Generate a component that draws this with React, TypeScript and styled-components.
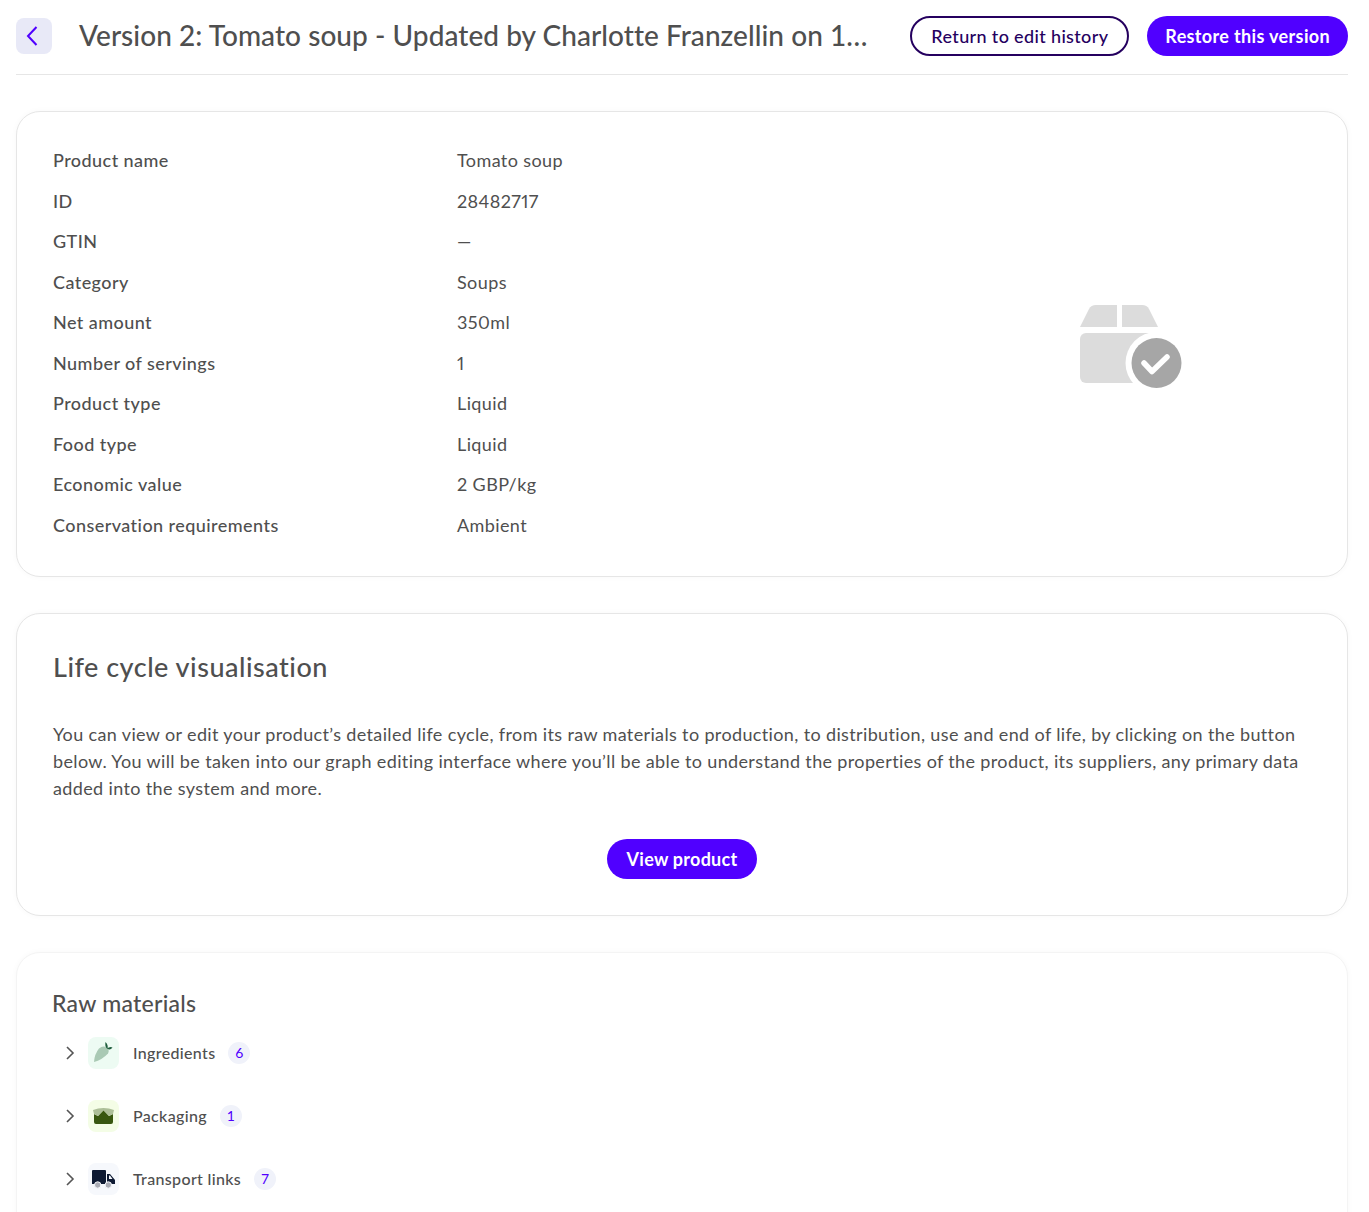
import React from 'react'
import styled, { createGlobalStyle } from 'styled-components'

const GlobalStyle = createGlobalStyle`
  html, body {
    margin: 0;
    height: 100%;
    overflow: hidden;
    background: #fff;
  }
  * {
    box-sizing: border-box;
  }
  body {
    font-family: 'Lato', 'Noto Sans', sans-serif;
    color: #4f4f4f;
  }
`

const Page = styled.div`
  height: 1212px;
  overflow: hidden;
  padding: 16px 21px 0 16px;
`

const Header = styled.header`
  display: flex;
  align-items: center;
  height: 59px;
  padding-bottom: 18px;
  border-bottom: 1px solid #e6e6e6;
`

const BackButton = styled.button`
  display: flex;
  align-items: center;
  justify-content: center;
  flex: none;
  width: 36px;
  height: 36px;
  margin-right: 27px;
  padding: 0 4px 0 0;
  border: 0;
  border-radius: 8px;
  background: #e8e9f7;
  color: #5000ff;
`

const Title = styled.h1`
  flex: 1;
  min-width: 0;
  margin: 0 0 2px;
  font-size: 28px;
  font-weight: 500;
  line-height: 40px;
  letter-spacing: 0.05px;
  color: #4f4f4f;
  white-space: nowrap;
`

const PillButton = styled.button<{ $outline?: boolean }>`
  flex: none;
  height: 40px;
  padding: 0 ${(p) => (p.$outline ? '19px' : '18px')};
  margin-left: ${(p) => (p.$outline ? '0' : '18px')};
  border-radius: 20px;
  border: ${(p) => (p.$outline ? '2px solid #25005f' : '0')};
  background: ${(p) => (p.$outline ? '#fff' : '#5000ff')};
  color: ${(p) => (p.$outline ? '#25005f' : '#fff')};
  font-family: inherit;
  font-size: 18px;
  font-weight: ${(p) => (p.$outline ? 500 : 700)};
  letter-spacing: 0.35px;
  line-height: 36px;
`

const ViewButton = styled(PillButton)`
  margin-left: 0;
  padding: 0 20px;
  letter-spacing: 0.25px;
`

const Card = styled.section`
  margin-top: 36px;
  padding: 36px;
  background: #fff;
  border: 1px solid #e6e6e6;
  border-radius: 24px;
  box-shadow: 0 0 6px rgba(0, 0, 0, 0.03);
`

const DetailsCard = styled(Card)`
  display: flex;
  height: 466px;
  padding-top: 28px;
`

const Details = styled.dl`
  flex: 1;
  display: grid;
  grid-template-columns: 404px 1fr;
  grid-auto-rows: 40.5px;
  align-items: center;
  margin: 0;
  font-size: 18px;
`

const Label = styled.dt`
  font-weight: 500;
  letter-spacing: 0.44px;
`

const Value = styled.dd`
  margin: 0;
  letter-spacing: 0.4px;
  font-variant-numeric: proportional-nums;
`

const PictureSlot = styled.div`
  flex: none;
  display: flex;
  align-items: center;
  justify-content: center;
  width: 340px;
  margin: 14px 10px 0 0;
`

const LifeCycleCard = styled(Card)`
  height: 303px;
  padding-top: 35px;
`

const SectionTitle = styled.h2`
  margin: 0;
  font-size: 27px;
  font-weight: 500;
  line-height: 36px;
  letter-spacing: 0.5px;
`

const Paragraph = styled.p`
  margin: 36px 0 0;
  font-size: 18px;
  line-height: 27px;
  letter-spacing: 0.36px;
`

const Centered = styled.div`
  display: flex;
  justify-content: center;
  margin-top: 37px;
`

const MaterialsCard = styled(Card)`
  height: 400px;
  padding: 33px 35px;
  border-color: #f4f4f4;
`

const MaterialsTitle = styled.h2`
  margin: 0;
  font-size: 23px;
  font-weight: 500;
  line-height: 34px;
  letter-spacing: 0.25px;
`

const MaterialsList = styled.ul`
  margin: 1px 0 0;
  padding: 0;
  list-style: none;
`

const MaterialRow = styled.li`
  display: flex;
  align-items: center;
  height: 63px;
  padding-left: 13px;
  font-size: 16px;
  font-weight: 500;
  letter-spacing: 0.34px;
`

const Chevron = styled.span`
  display: flex;
  width: 23px;
  color: #555;
`

const IconTile = styled.span<{ $bg: string }>`
  display: flex;
  align-items: center;
  justify-content: center;
  width: 31px;
  height: 32px;
  margin-right: 14px;
  border-radius: 8px;
  background: ${(p) => p.$bg};
`

const Count = styled.span`
  display: flex;
  align-items: center;
  justify-content: center;
  width: 22px;
  height: 22px;
  margin-left: 13px;
  border-radius: 50%;
  background: #f0f2fa;
  color: #5000ff;
  font-size: 14px;
  font-weight: 400;
`

const details = [
  ['Product name', 'Tomato soup'],
  ['ID', '28482717'],
  ['GTIN', '—'],
  ['Category', 'Soups'],
  ['Net amount', '350ml'],
  ['Number of servings', '1'],
  ['Product type', 'Liquid'],
  ['Food type', 'Liquid'],
  ['Economic value', '2 GBP/kg'],
  ['Conservation requirements', 'Ambient'],
]

function BoxCheckIcon() {
  return (
    <svg width="102" height="85" viewBox="0 0 102 85">
      <path d="M0 22 L9 4 Q11 0 16 0 H37 V22 Z" fill="#dcdcdc" />
      <path d="M42 0 H62 Q67 0 69 4 L78 22 H42 Z" fill="#dcdcdc" />
      <rect x="0" y="28" width="78" height="50" rx="6" fill="#dcdcdc" />
      <circle cx="76.5" cy="58" r="31" fill="#fff" />
      <circle cx="76.5" cy="58" r="25" fill="#a6a6a6" />
      <path
        d="M64 58 L72 66.5 L87 52"
        fill="none"
        stroke="#fff"
        strokeWidth="5.5"
        strokeLinecap="round"
        strokeLinejoin="round"
      />
    </svg>
  )
}

function CarrotIcon() {
  return (
    <svg width="31" height="32" viewBox="0 0 31 32">
      <path d="M6 25 Q6.5 17 11 11.5 Q15 8 18.5 10.5 Q22 13 20 16.5 Q14 23 6 25 Z" fill="#a9c9b4" />
      <path d="M17.5 5 Q20.5 8 19.5 12 Q16.5 10 17.5 5 Z" fill="#1d5c3c" />
      <path d="M19 11.5 Q22 9 24.5 10.5 Q22 14 19 11.5 Z" fill="#1d5c3c" />
    </svg>
  )
}

function PackageIcon() {
  return (
    <svg width="31" height="32" viewBox="0 0 31 32">
      <path d="M6 14 L10 16 L15.5 10 L21 16 L25 14 V22 Q25 24 23 24 H8 Q6 24 6 22 Z" fill="#38570f" />
      <path d="M5 10 Q10 8 15.5 8 Q21 8 26 10 L25 14 L21 16 L15.5 10.5 L10 16 L6 14 Z" fill="#adbf98" />
    </svg>
  )
}

function TruckIcon() {
  return (
    <svg width="31" height="32" viewBox="0 0 31 32">
      <path d="M4 8 Q4 7 5 7 H17 Q18 7 18 8 V21 H4 Z" fill="#0e1a33" />
      <path d="M19 11 H22 L27 17 V21 H19 Z M21 12.5 V16 H24.5 L22 12.5 Z" fill="#0e1a33" fillRule="evenodd" />
      <circle cx="9.7" cy="22" r="3.2" fill="#aaacb5" stroke="#f6f8fc" />
      <circle cx="20.3" cy="22" r="3.2" fill="#aaacb5" stroke="#f6f8fc" />
    </svg>
  )
}

const RightChevron = () => (
  <svg width="10" height="14" viewBox="0 0 10 14" fill="none" stroke="currentColor" strokeWidth="1.6">
    <path d="M2 1 L8 7 L2 13" />
  </svg>
)

const materials = [
  { name: 'Ingredients', count: 6, bg: '#edfbf3', icon: <CarrotIcon /> },
  { name: 'Packaging', count: 1, bg: '#f4fde6', icon: <PackageIcon /> },
  { name: 'Transport links', count: 7, bg: '#f6f8fc', icon: <TruckIcon /> },
]

export default function App() {
  return (
    <>
      <GlobalStyle />
      <Page>
        <Header>
          <BackButton aria-label="Back">
            <svg width="12" height="20" viewBox="0 0 12 20" fill="none" stroke="currentColor" strokeWidth="2">
              <path d="M10.5 1 L2 10 L10.5 19" />
            </svg>
          </BackButton>
          <Title>Version 2: Tomato soup - Updated by Charlotte Franzellin on 1…</Title>
          <PillButton $outline>Return to edit history</PillButton>
          <PillButton>Restore this version</PillButton>
        </Header>

        <DetailsCard>
          <Details>
            {details.map(([label, value]) => (
              <React.Fragment key={label}>
                <Label>{label}</Label>
                <Value>{value}</Value>
              </React.Fragment>
            ))}
          </Details>
          <PictureSlot>
            <BoxCheckIcon />
          </PictureSlot>
        </DetailsCard>

        <LifeCycleCard>
          <SectionTitle>Life cycle visualisation</SectionTitle>
          <Paragraph>
            You can view or edit your product’s detailed life cycle, from its raw materials to production, to
            distribution, use and end of life, by clicking on the button below. You will be taken into our graph
            editing interface where you’ll be able to understand the properties of the product, its suppliers, any
            primary data added into the system and more.
          </Paragraph>
          <Centered>
            <ViewButton>View product</ViewButton>
          </Centered>
        </LifeCycleCard>

        <MaterialsCard>
          <MaterialsTitle>Raw materials</MaterialsTitle>
          <MaterialsList>
            {materials.map((m) => (
              <MaterialRow key={m.name}>
                <Chevron>
                  <RightChevron />
                </Chevron>
                <IconTile $bg={m.bg}>{m.icon}</IconTile>
                {m.name}
                <Count>{m.count}</Count>
              </MaterialRow>
            ))}
          </MaterialsList>
        </MaterialsCard>
      </Page>
    </>
  )
}
